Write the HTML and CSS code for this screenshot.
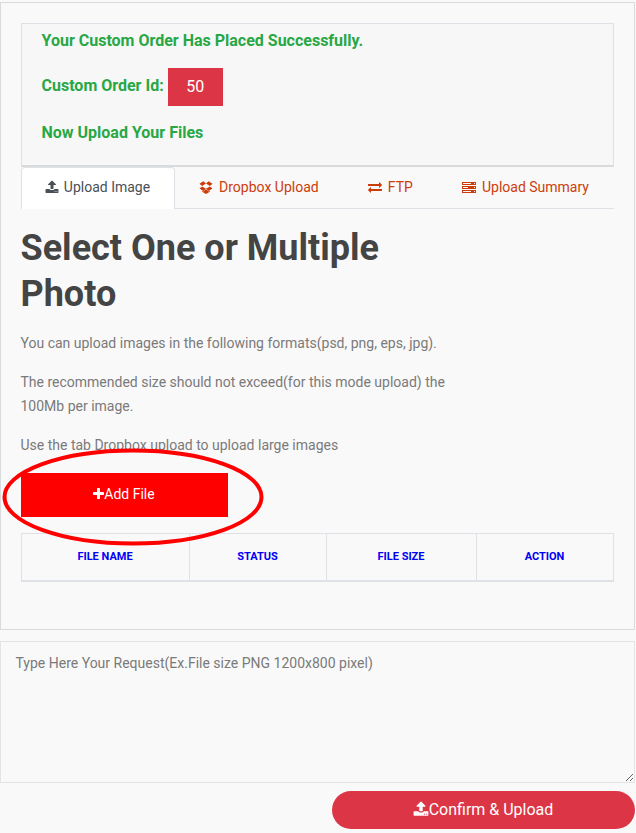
FILE: index.html
```
<!DOCTYPE html>
<html lang="en">
<head>
<meta charset="utf-8">
<title>Upload Files</title>
<link rel="stylesheet" href="styles.css">
</head>
<body>
<svg width="0" height="0" class="sprite" aria-hidden="true">
  <symbol id="upload" viewBox="0 0 1792 1792"><path d="M1344 1472q0-26-19-45t-45-19-45 19-19 45 19 45 45 19 45-19 19-45zm256 0q0-26-19-45t-45-19-45 19-19 45 19 45 45 19 45-19 19-45zm128-224v320q0 40-28 68t-68 28h-1472q-40 0-68-28t-28-68v-320q0-40 28-68t68-28h427q21 56 70.500 92t110.500 36h256q61 0 110.500-36t70.500-92h427q40 0 68 28t28 68zm-325-648q-17 40-59 40h-256v448q0 26-19 45t-45 19h-256q-26 0-45-19t-19-45v-448h-256q-42 0-59-40-17-39 14-69l448-448q18-19 45-19t45 19l448 448q31 30 14 69z"/></symbol>
  <symbol id="dropbox" viewBox="0 0 1792 1792"><path d="M402 829l494 305-342 285-490-319zm986 555v108l-490 293v1l-1-1-1 1v-1l-489-293v-108l147 96 342-284v-2l1 1 1-1v2l343 284zm-834-1211l342 285-494 304-338-270zm836 656l338 271-489 319-343-285zm-151-656l489 319-338 270-494-304z"/></symbol>
  <symbol id="exchange" viewBox="0 0 1792 1792"><path d="M1792 1184v192q0 13-9.500 22.500t-22.500 9.500h-1376v192q0 13-9.500 22.500t-22.500 9.500q-12 0-24-10l-319-320q-9-9-9-22 0-14 9-23l320-320q9-9 23-9 13 0 22.500 9.500t9.500 22.500v192h1376q13 0 22.500 9.500t9.500 22.500zm0-544q0 14-9 23l-320 320q-9 9-23 9-13 0-22.500-9.500t-9.500-22.500v-192h-1376q-13 0-22.500-9.500t-9.500-22.500v-192q0-13 9.500-22.500t22.500-9.500h1376v-192q0-14 9-23t23-9q12 0 24 10l319 319q9 9 9 23z"/></symbol>
  <symbol id="server" viewBox="0 0 14 11"><path fill-rule="evenodd" d="M0 0h14v3H0zM1 1v1h8V1zM12 1v1h1V1zM0 4h14v3H0zM1 5v1h5V5zM12 5v1h1V5zM0 8h14v3H0zM1 9v1h8V9zM12 9v1h1V9z"/></symbol>
  <symbol id="plus" viewBox="192 0 1408 1792"><path d="M1600 736v192q0 40-28 68t-68 28h-416v416q0 40-28 68t-68 28h-192q-40 0-68-28t-28-68v-416h-416q-40 0-68-28t-28-68v-192q0-40 28-68t68-28h416v-416q0-40 28-68t68-28h192q40 0 68 28t28 68v416h416q40 0 68 28t28 68z"/></symbol>
</svg>
<main class="panel">
  <section class="notice">
    <p>Your Custom Order Has Placed Successfully.</p>
    <p class="order"><span class="order-label">Custom Order Id:</span> <span class="order-id">50</span></p>
    <p>Now Upload Your Files</p>
  </section>
  <nav class="tabs">
    <a class="tab active"><svg class="icon"><use href="#upload"/></svg>Upload Image</a>
    <a class="tab"><svg class="icon"><use href="#dropbox"/></svg>Dropbox Upload</a>
    <a class="tab"><svg class="icon"><use href="#exchange"/></svg>FTP</a>
    <a class="tab"><svg class="icon server"><use href="#server"/></svg>Upload Summary</a>
  </nav>
  <section class="intro">
    <h1>Select One or Multiple Photo</h1>
    <p>You can upload images in the following formats(psd, png, eps, jpg).</p>
    <p>The recommended size should not exceed(for this mode upload) the 100Mb per image.</p>
    <p>Use the tab Dropbox upload to upload large images</p>
  </section>
  <div class="add-wrap">
    <button class="add"><svg class="icon-plus"><use href="#plus"/></svg>Add File</button>
    <svg class="ring" viewBox="0 0 262 98"><ellipse cx="131" cy="49" rx="128.500" ry="46.500"/></svg>
  </div>
  <table class="files">
    <colgroup><col class="c1"><col class="c2"><col class="c3"><col class="c4"></colgroup>
    <thead><tr><th>FILE NAME</th><th>STATUS</th><th>FILE SIZE</th><th>ACTION</th></tr></thead>
  </table>
</main>
<textarea class="request" placeholder="Type Here Your Request(Ex.File size PNG 1200x800 pixel)"></textarea>
<button class="confirm"><svg class="icon-confirm"><use href="#upload"/></svg>Confirm &amp; Upload</button>
</body>
</html>
```
FILE: styles.css
```
* { box-sizing: border-box; }
body {
  margin: 0;
  padding-top: 2px;
  width: 635px;
  height: 833px;
  overflow: hidden;
  display: flex;
  flex-direction: column;
  background: #f9f9f9;
  color: #7a7a7a;
  font: 14px/24px Roboto, sans-serif;
}
svg { fill: currentColor; flex: none; }
.sprite { display: none; }
p { margin: 0; }
button { border: 0; padding: 0; color: #fff; font-family: inherit; display: flex; align-items: center; justify-content: center; }
.panel { height: 628px; flex: none; padding: 20px; border: 1px solid #d9dadb; }
.notice {
  height: 144px;
  padding: 5px 20px 0 19.500px;
  background: #f7f7f7;
  border: 1px solid #dee2e6;
  border-bottom: 2px solid #d9dadb;
  color: #28a745;
  font-size: 16px;
  font-weight: 700;
}
.order { display: flex; align-items: center; gap: 4px; height: 38px; margin: 15px 0 15px; }
.order-label { padding-bottom: 2px; }
.order-id { width: 55px; height: 38px; line-height: 38px; text-align: center; background: #dc3545; color: #fff; font-weight: 400; }
.tabs { display: flex; height: 42px; border-bottom: 1px solid #dee2e6; }
.tab {
  flex: 1 1 auto;
  display: flex;
  justify-content: center;
  align-items: center;
  gap: 6px;
  height: 42px;
  padding: 0 1px 2px 0;
  color: #cc3d0c;
}
.tab.active { flex: 0 0 154px; gap: 5px; padding: 0 1px 3px 0; background: #fff; color: #495057; border: 1px solid #dee2e6; border-bottom: 0; border-radius: 4px 4px 0 0; }
.icon { width: 14px; height: 14px; }
.icon.server { height: 11px; }
.intro { width: 430px; margin-left: -0.500px; padding-top: 16px; }
.intro h1 { margin: 0 0 14px; color: #444; font-size: 36px; line-height: 46px; font-weight: 700; }
.intro p { margin-bottom: 15px; }
.add-wrap { position: relative; height: 44px; margin: 16px 0; }
.add { width: 207px; height: 44px; padding: 0 1px 2px 0; background: #f00; font-size: 14px; }
.icon-plus { width: 11px; height: 14px; }
.ring { position: absolute; left: -19px; top: -25px; width: 262px; height: 98px; }
.ring ellipse { fill: none; stroke: #f00; stroke-width: 4; }
.files { width: 593px; height: 49px; table-layout: fixed; border-collapse: collapse; border: 1px solid #dee2e6; border-bottom-width: 2px; }
.files th { border: 1px solid #dee2e6; border-bottom-width: 2px; padding: 0 1px 0 0; height: 47px; color: #0000f5; font-size: 11px; line-height: 20px; font-weight: 700; }
.c1 { width: 168px; }
.c2 { width: 137px; }
.c3 { width: 150px; }
.c4 { width: 137px; }
.request {
  flex: none;
  display: block;
  width: 635px;
  height: 142px;
  margin: 11px 0 8px;
  padding: 9px 15px 9px 14.500px;
  border: 1px solid #e3e4e5;
  background: transparent;
  font: inherit;
  outline: 0;
}
.request::placeholder { color: #7a7a7a; }
.confirm { align-self: flex-end; flex: none; width: 303px; height: 38px; padding: 0 1px 2px 0; border-radius: 19px; background: #dc3545; font-size: 16px; }
.icon-confirm { width: 16px; height: 16px; }
```
